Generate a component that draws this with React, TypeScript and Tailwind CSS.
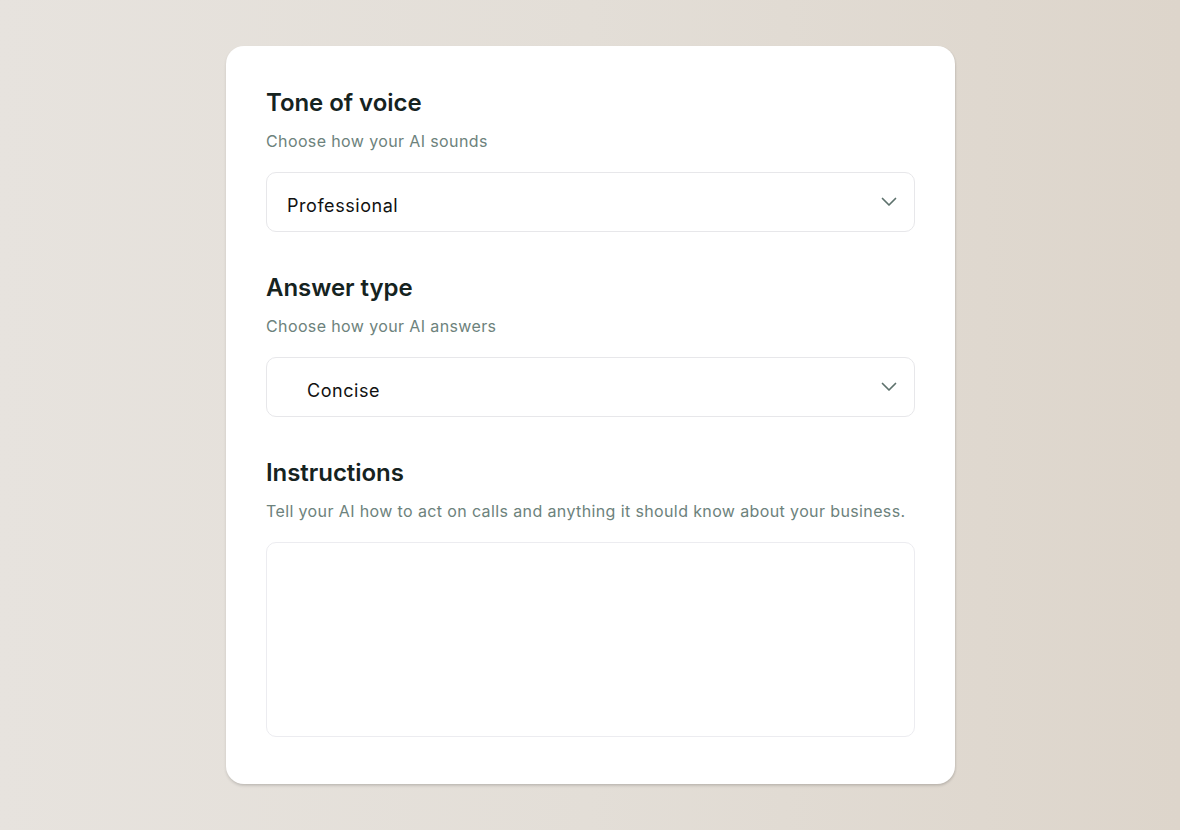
import React from "react";

function Chevron() {
  return (
    <svg width="16" height="16" viewBox="0 0 16 16" fill="none" className="text-[#5d716c]">
      <path d="M1.5 4.5L8 11L14.5 4.5" stroke="currentColor" strokeWidth="1.7" strokeLinecap="round" strokeLinejoin="round" />
    </svg>
  );
}

function Heading({ title, subtitle }: { title: string; subtitle: string }) {
  return (
    <div>
      <h2 className="text-[24px] leading-[32px] font-semibold text-[#16231f] tracking-[-0.05px]">{title}</h2>
      <p className="mt-[10px] text-[16px] leading-[24px] text-[#6d827c] tracking-[0.38px]">{subtitle}</p>
    </div>
  );
}

function Select({ value, inset }: { value: string; inset: string }) {
  return (
    <div className="mt-[19px] h-[60px] rounded-[10px] border border-[#e7e7ea] bg-white flex items-center justify-between pr-[17px]">
      <span className={`${inset} pt-[6px] text-[18px] text-[#111111] tracking-[0.55px]`}>{value}</span>
      <span className="mt-[-1px]">
        <Chevron />
      </span>
    </div>
  );
}

export default function App() {
  return (
    <div
      className="w-full min-h-[830px] flex justify-center pt-[46px] bg-gradient-to-r from-[#e7e3de] via-[#e3ded7] to-[#ddd5cb]"
      style={{ fontFamily: "Inter, 'Noto Sans', sans-serif" }}
    >
      <div className="ml-[1px] w-[729px] h-[738px] bg-white rounded-[18px] shadow-[0_2px_3px_rgba(0,0,0,0.12),1px_1px_2px_rgba(0,0,0,0.06)] pl-[40px] pr-[40px] pt-[41px] flex flex-col">
        <Heading title="Tone of voice" subtitle="Choose how your AI sounds" />
        <Select value="Professional" inset="pl-[20px]" />
        <div className="mt-[40px]">
          <Heading title="Answer type" subtitle="Choose how your AI answers" />
          <Select value="Concise" inset="pl-[40px]" />
        </div>
        <div className="mt-[40px]">
          <Heading title="Instructions" subtitle="Tell your AI how to act on calls and anything it should know about your business." />
          <div className="mt-[19px] h-[195px] rounded-[10px] border border-[#ececf0] bg-white" />
        </div>
      </div>
    </div>
  );
}
